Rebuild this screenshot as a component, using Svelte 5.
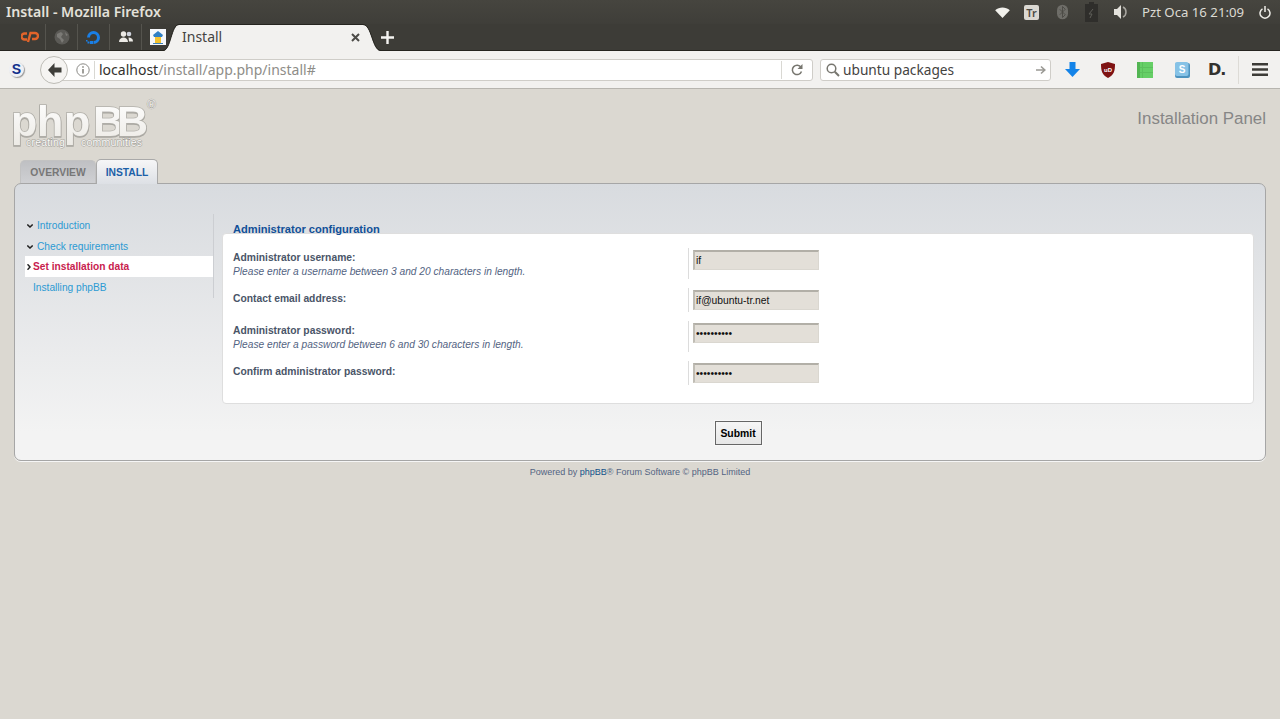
<script>
  const menu = [
    { label: 'Introduction', state: 'done' },
    { label: 'Check requirements', state: 'done' },
    { label: 'Set installation data', state: 'active' },
    { label: 'Installing phpBB', state: 'todo' }
  ];
  const fields = [
    { label: 'Administrator username:', hint: 'Please enter a username between 3 and 20 characters in length.', type: 'text', value: 'if' },
    { label: 'Contact email address:', hint: '', type: 'text', value: 'if@ubuntu-tr.net' },
    { label: 'Administrator password:', hint: 'Please enter a password between 6 and 30 characters in length.', type: 'password', value: 'abcdefghij' },
    { label: 'Confirm administrator password:', hint: '', type: 'password', value: 'abcdefghij' }
  ];
</script>

<div class="app">
  <header class="titlebar">
    <span class="wintitle">Install - Mozilla Firefox</span>
    <div class="indicators">
      <svg class="i-wifi" width="15" height="11" viewBox="0 0 16 12"><path d="M0 3.500C4.500-.6 11.500-.6 16 3.500L8 12Z" fill="#f2f1ec"/></svg>
      <span class="tr">Tr</span>
      <svg class="i-bt" width="11" height="16" viewBox="0 0 12 16"><rect width="12" height="16" rx="6" fill="#6e6d68"/><path d="M3 5l6 6-3 3V2l3 3-6 6" fill="none" stroke="#4a4944" stroke-width="1"/></svg>
      <svg class="i-bat" width="13" height="20" viewBox="0 0 13 20"><path d="M4 0h5v2h4v18H0V2h4Z" fill="#2f2e2b"/><path d="M8 7l-4 5h3l-2 4" fill="none" stroke="#5f5e59"/></svg>
      <svg class="i-vol" width="14" height="14" viewBox="0 0 14 14"><path d="M0 4h3l4-4v14l-4-4H0Z" fill="#e4e2dc"/><path d="M9 2c4 2 4 8 0 10" fill="none" stroke="#a9a7a1" stroke-width="1.500"/></svg>
      <span class="clock">Pzt Oca 16 21:09</span>
      <svg class="i-pow" width="12" height="13" viewBox="0 0 12 13"><path d="M3.500 2.800a5 5 0 1 0 5 0M6 0v6" fill="none" stroke="#eeede8" stroke-width="1.500"/></svg>
    </div>
  </header>

  <div class="tabbar">
    <div class="pin"><svg width="18" height="12" viewBox="0 0 18 12"><path d="M6 2.500H3.500a3 3 0 0 0 0 6H6M7 11l2.500-9H14a2.800 2.800 0 0 1 0 6h-3" fill="none" stroke="#e2642a" stroke-width="2.400"/></svg></div>
    <div class="pin"><svg width="16" height="16" viewBox="0 0 16 16"><circle cx="8" cy="8" r="7.500" fill="#5b5a56"/><path d="M3 5l4-2 2 2-2 3 3 3-2 3-2-4-3-2ZM11 3l3 3-2 1Z" fill="#7b7a76"/></svg></div>
    <div class="pin"><svg width="17" height="17" viewBox="0 0 17 17"><path d="M8.500 15a6.500 6.500 0 1 0-6.500-6.500h3a3.500 3.500 0 1 1 3.500 3.500Z" fill="#1a7fe6"/><path d="M5 12h3v3H5ZM2.500 12.500h2v2h-2ZM1 11h1.500v1.500H1Z" fill="#1a7fe6"/></svg></div>
    <div class="pin"><svg width="14" height="12" viewBox="0 0 14 12"><circle cx="4.500" cy="3" r="2.700" fill="#eceae5"/><circle cx="10" cy="3" r="2.300" fill="#cfd3dc"/><path d="M0 11c0-6 9-6 9 0ZM9.500 6.500c2.500 0 4.500 1 4.500 4H10Z" fill="#eceae5"/></svg></div>
    <div class="pin last"><svg width="16" height="16" viewBox="0 0 16 16"><rect width="16" height="16" fill="#f6f8fb"/><path d="M8 2l5 4-1 2H4L3 6Z" fill="#2f7fc4"/><path d="M5 8h6v6H5Z" fill="#f2c230"/><path d="M3 14h10v1H3Z" fill="#3a7fb8"/></svg></div>
    <div class="tab">
      <svg class="flank" width="16" height="27" viewBox="0 0 16 27"><path d="M0 27C8 27 8 1 16 1V27Z" fill="#f2f1ef"/><path d="M0 26.500C8 26.500 8 .5 16 .5" fill="none" stroke="#25241f"/></svg>
      <div class="tabbody"><span>Install</span><svg width="9" height="9" viewBox="0 0 9 9"><path d="M1 1l7 7M8 1L1 8" stroke="#4c4b47" stroke-width="2"/></svg></div>
      <svg class="flank" width="18" height="27" viewBox="0 0 18 27"><path d="M18 27C9 27 9 1 0 1V27Z" fill="#f2f1ef"/><path d="M18 26.500C9 26.500 9 .5 0 .5" fill="none" stroke="#25241f"/></svg>
    </div>
    <svg class="plus" width="13" height="13" viewBox="0 0 13 13"><path d="M6.500 0v13M0 6.500h13" stroke="#f5f4f1" stroke-width="2.400"/></svg>
  </div>

  <nav class="navbar">
    <div class="sbtn"><span>S</span></div>
    <div class="back"><svg width="15" height="14" viewBox="0 0 15 14"><path d="M7.500 0L1 7l6.500 7V9.500H14.500V4.500H7.500Z" fill="#3f3e3a"/></svg></div>
    <div class="urlbar">
      <svg class="info" width="14" height="14" viewBox="0 0 14 14"><circle cx="7" cy="7" r="6.200" fill="none" stroke="#8b8a86"/><path d="M7 6v4.500M7 3.200v1.500" stroke="#77766f" stroke-width="1.400"/></svg>
      <span class="urlsep"></span>
      <span class="url"><b>localhost</b>/install/app.php/install#</span>
      <span class="urlsep end"></span>
      <svg class="reload" width="12" height="12" viewBox="0 0 12 12"><path d="M10.500 7.500a4.700 4.700 0 1 1-.5-4.200" fill="none" stroke="#77766f" stroke-width="1.500"/><path d="M11.500 0v5h-5Z" fill="#77766f"/></svg>
    </div>
    <div class="search">
      <svg width="14" height="14" viewBox="0 0 14 14"><circle cx="5.500" cy="5.500" r="4.300" fill="none" stroke="#77766f" stroke-width="1.500"/><path d="M8.800 8.800L13 13" stroke="#77766f" stroke-width="2"/></svg>
      <span class="query">ubuntu packages</span>
      <svg width="10" height="10" viewBox="0 0 10 10"><path d="M0 5h8M5 1.500L8.800 5 5 8.500" fill="none" stroke="#9a9994" stroke-width="1.600"/></svg>
    </div>
    <div class="tools">
      <svg width="15" height="15" viewBox="0 0 15 15"><path d="M4.500 0h6v7H15L7.500 15 0 7h4.500Z" fill="#1383e8"/></svg>
      <svg width="14" height="16" viewBox="0 0 14 16"><path d="M7 0l7 2c0 7-1 11-7 14C1 13 0 9 0 2Z" fill="#7f1313"/><text x="7" y="9.500" class="ub">uD</text></svg>
      <svg width="16" height="16" viewBox="0 0 16 16"><rect width="16" height="16" fill="#66cf66"/><path d="M5.500 0v16M0 5.500h16M0 10.500h16" stroke="#5cc05c"/><path d="M0 0h3v16H0Z" fill="#52b552"/></svg>
      <svg width="15" height="16" viewBox="0 0 15 16"><rect y="1" width="15" height="15" rx="2" fill="#4d93bf"/><rect width="13.500" height="14" rx="2" fill="#86c2e6"/><text x="7" y="11" class="sk">S</text></svg>
      <span class="dee">D<i>.</i></span>
      <span class="toolsep"></span>
      <svg width="16" height="13" viewBox="0 0 16 13"><path d="M0 0h16v2.600H0ZM0 5.200h16v2.600H0ZM0 10.400h16V13H0Z" fill="#3c3b37"/></svg>
    </div>
  </nav>

  <main class="page">
    <div class="sitehead">
      <svg class="logo" width="146" height="56" viewBox="0 0 146 56" role="img" aria-label="phpBB">
        <defs><linearGradient id="lg" x1="0" y1="0" x2="0" y2="1"><stop offset="0" stop-color="#ffffff"/><stop offset="1" stop-color="#eceae5"/></linearGradient></defs>
        <text x="-3 23 50 79 103" y="38" class="lmain">phpBB</text>
        <text x="12" y="47.500" class="lsub">creating</text>
        <text x="67" y="47.500" class="lsub">communities</text>
        <text x="133" y="11" class="lreg">®</text>
      </svg>
      <div class="paneltitle">Installation Panel</div>
    </div>

    <div class="tabs">
      <span class="ptab">OVERVIEW</span>
      <span class="ptab on">INSTALL</span>
    </div>

    <section class="panel">
      <div class="columns">
        <aside class="side">
          <ul>
            {#each menu as m}
              <li class={m.state}>
                {#if m.state === 'done'}
                  <svg class="mark" width="6" height="4" viewBox="0 0 6 4"><path d="M.3.5l2.700 2.500L5.700.5" fill="none" stroke="#222" stroke-width="1.500"/></svg>
                {:else if m.state === 'active'}
                  <svg class="mark act" width="4" height="6" viewBox="0 0 4 6"><path d="M.5.3l2.500 2.700L.5 5.700" fill="none" stroke="#222" stroke-width="1.500"/></svg>
                {/if}
                <span>{m.label}</span>
              </li>
            {/each}
          </ul>
        </aside>
        <div class="content">
          <h2>Administrator configuration</h2>
          <div class="box">
            {#each fields as f}
              <div class="row" class:tall={f.hint}>
                <div class="dt">
                  <strong>{f.label}</strong>
                  {#if f.hint}<em>{f.hint}</em>{/if}
                </div>
                <div class="dd"><input type={f.type} value={f.value} readonly /></div>
              </div>
            {/each}
          </div>
          <div class="actions"><button type="button">Submit</button></div>
        </div>
      </div>
    </section>

    <footer class="foot">Powered by <span>phpBB</span>® Forum Software © phpBB Limited</footer>
  </main>
</div>

<style>
  :global(body) { margin: 0; background: #dbd8d1; }
  .app { min-height: 719px; background: #dbd8d1; font-family: "Liberation Sans", Arial, sans-serif; overflow: hidden; }

  .titlebar { height: 24px; box-sizing: border-box; display: flex; align-items: center; justify-content: space-between; padding-left: 6px; background: linear-gradient(#46453f, #3f3e39); color: #e3e1da; font-family: "Noto Sans", sans-serif; font-size: 13px; }
  .wintitle { font-weight: 600; font-size: 14.150px; margin-top: -2px; }
  .indicators { display: flex; align-items: center; height: 23px; color: #dcdad3; }
  .i-wifi { margin-right: 14px; margin-top: 1px; }
  .tr { width: 15px; height: 15px; background: #dad8d2; border-radius: 2px; color: #4a4944; font-size: 11px; font-weight: 600; line-height: 15px; text-align: center; margin-right: 18px; }
  .i-bt { margin-right: 17px; }
  .i-bat { margin-right: 16px; margin-top: -1px; }
  .i-vol { margin-right: 14px; }
  .clock { font-size: 13.200px; margin-right: 14px; width: 103px; white-space: nowrap; }
  .i-pow { margin-right: 9px; }

  .tabbar { height: 27px; box-sizing: border-box; background: #3d3c37; border-bottom: 1px solid #25241f; display: flex; align-items: flex-end; padding-left: 14px; }
  .pin { width: 32px; height: 26px; box-sizing: border-box; display: flex; align-items: center; justify-content: center; border-right: 1px solid #55544e; }
  .pin.last { border-right: 0; }
  .tab { display: flex; height: 27px; margin-left: -11px; margin-bottom: -1px; align-items: stretch; font-family: "Noto Sans", sans-serif; }
  .flank { display: block; flex: none; }
  .tabbody { width: 184px; background: #f2f1ef; border-top: 1px solid #25241f; box-sizing: border-box; display: flex; align-items: center; justify-content: space-between; padding: 0 3px 0 0; font-size: 14px; color: #44433f; }
  .tabbody span { margin-left: 3px; margin-top: -4px; }
  .tabbody svg { margin-top: -1px; }
  .plus { margin: 0 0 6px 0; }

  .navbar { height: 38px; box-sizing: border-box; background: #f2f1ef; border-bottom: 1px solid #b7b5af; display: flex; align-items: center; }
  .sbtn { width: 40px; flex: none; padding-left: 9px; box-sizing: border-box; }
  .sbtn span { display: block; width: 15px; height: 15px; border-radius: 50%; background: #eef0f5; box-shadow: 1px 1px 1px #999; color: #12308c; font: 900 14px/15px "Liberation Sans", sans-serif; text-align: center; }
  .back { width: 28px; height: 28px; flex: none; border-radius: 50%; border: 1px solid #bdbcb6; background: #f5f4f2; display: flex; align-items: center; justify-content: center; position: relative; z-index: 1; box-sizing: border-box; }
  .urlbar { width: 759px; margin-left: -14px; height: 22px; flex: none; box-sizing: border-box; background: #fff; border: 1px solid #cfcdc8; border-radius: 0 3px 3px 0; display: flex; align-items: center; padding-left: 21px; font-family: "Noto Sans", sans-serif; font-size: 14px; color: #8e8d88; }
  .info { flex: none; }
  .urlsep { width: 1px; height: 18px; background: #d9d8d3; margin: 0 4px 0 4px; flex: none; }
  .url { flex: 1; white-space: nowrap; }
  .url b { font-weight: 400; color: #33322e; }
  .urlsep.end { margin: 0; }
  .reload { margin: 0 9px; flex: none; }
  .search { width: 231px; margin-left: 7px; height: 22px; flex: none; box-sizing: border-box; background: #fff; border: 1px solid #cfcdc8; border-radius: 3px; display: flex; align-items: center; padding: 0 4px 0 5px; font-family: "Noto Sans", sans-serif; font-size: 13.700px; color: #44433f; }
  .query { flex: 1; margin-left: 3px; white-space: nowrap; }
  .tools { display: flex; align-items: center; margin-left: 13px; flex: 1; }
  .tools > svg:nth-child(1) { margin: 0 0 0 1px; }
  .tools > svg:nth-child(2) { margin-left: 21px; }
  .tools > svg:nth-child(3) { margin-left: 22px; }
  .tools > svg:nth-child(4) { margin-left: 22px; }
  .ub { font: 700 6px "Liberation Sans", sans-serif; fill: #fff; text-anchor: middle; }
  .sk { font: 700 10px "Liberation Sans", sans-serif; fill: #fff; text-anchor: middle; }
  .dee { margin-left: 18px; width: 19px; font: 700 16px/16px "DejaVu Sans", sans-serif; letter-spacing: -1px; color: #33322e; }
  .dee i { font-style: normal; }
  .toolsep { width: 1px; height: 28px; background: #dddbd6; margin: 0 13px 0 11px; }

  .page { padding: 0 14px; }
  .sitehead { height: 70px; display: flex; justify-content: space-between; }
  .logo { margin-top: 9px; display: block; overflow: visible; }
  .lmain { font: 700 43px "Liberation Sans", sans-serif; fill: url(#lg); stroke: #b1afa9; stroke-width: 1.600px; paint-order: stroke; filter: drop-shadow(0 1px 0 #a8a6a0); }
  .lsub { font: 400 10.500px "Liberation Sans", sans-serif; fill: #fbfaf8; stroke: #a09e98; stroke-width: 1px; paint-order: stroke; letter-spacing: .2px; }
  .lreg { font: 400 12px "Liberation Sans", sans-serif; fill: #f8f7f4; stroke: #a5a39d; stroke-width: .8px; paint-order: stroke; }
  .paneltitle { margin-top: 20px; font-size: 16.900px; line-height: 20px; color: #868686; }

  .tabs { display: flex; align-items: flex-end; height: 24px; padding-left: 6px; position: relative; z-index: 1; }
  .ptab { height: 23px; box-sizing: border-box; width: 76px; text-align: center; font-size: 10.300px; font-weight: 700; line-height: 24px; color: #777; background: linear-gradient(#bfc0c3, #cfd0d3); border: 1px solid #c2c2c2; border-bottom: 0; border-radius: 5px 5px 0 0; }
  .ptab.on { height: 25px; width: 62px; margin-bottom: -1px; line-height: 26px; color: #1c60a8; background: linear-gradient(#f6f6f7, #dde0e5); border-color: #a9a9a9; }

  .panel { height: 278px; box-sizing: border-box; border: 1px solid #a6a6a6; border-radius: 7px; background: linear-gradient(#d8dbdf, #f3f3f3 90%); padding: 30px 11px 0 10px; box-shadow: 0 1px 0 #f6f6f6; }
  .columns { display: flex; }
  .side { width: 189px; flex: none; height: 84px; box-sizing: border-box; border-right: 1px solid #ccced2; }
  .side ul { list-style: none; margin: 0; padding: 1px 0 0; }
  .side li { height: 20.500px; font-size: 10.200px; line-height: 21px; padding-left: 12px; color: #2c9ad3; position: relative; }
  .side li.todo { padding-left: 8px; }
  .side li.active { padding-left: 8px; background: #fff; color: #c8224e; font-weight: 700; }
  .mark { position: absolute; left: 2px; top: 9px; display: block; }
  .mark.act { left: 2px; top: 8px; }

  .content { flex: 1; margin-left: 8px; }
  h2 { margin: 0; height: 19px; box-sizing: border-box; padding: 9px 0 0 11px; font-size: 11.100px; line-height: 12px; font-weight: 700; color: #115098; }
  .box { box-sizing: border-box; height: 171px; background: #fff; border: 1px solid #dedede; border-radius: 4px; padding: 14px 0 0 10px; }
  .row { display: flex; height: 24px; margin-bottom: 9px; }
  .row.tall { height: 31px; }
  .dt { width: 455px; flex: none; box-sizing: border-box; padding-top: 4px; font-size: 10.300px; color: #536482; }
  .tall .dt { padding-top: 3px; }
  .dt strong { display: block; line-height: 13px; color: #4a5568; }
  .dt em { display: block; margin-top: 1px; font-size: 10.200px; line-height: 13px; color: #536482; }
  .dd { border-left: 1px solid #dcdcdc; padding: 2px 0 0 4px; height: 100%; box-sizing: border-box; }
  input { display: block; width: 126px; height: 20px; box-sizing: border-box; margin: 0; padding: 0 1px; background: #e3dfd8; border: 1px solid #dad7d0; border-top: 2px solid #b2afa7; border-left: 2px solid #c0bdb5; font: 10.300px/14px "Liberation Sans", sans-serif; color: #111; outline: 0; border-radius: 0; }
  .actions { padding-top: 17px; display: flex; justify-content: center; }
  button { width: 47px; height: 24px; padding: 0; box-sizing: border-box; background: linear-gradient(#f6f6f6, #e6e6e6); border: 1px solid #666; box-shadow: 0 0 0 1px #f8f8f8; font: 700 10.400px "Liberation Sans", sans-serif; color: #000; border-radius: 0; }

  .foot { margin-top: 6px; text-align: center; font-size: 9px; line-height: 11px; color: #536482; }
  .foot span { color: #105289; }
</style>
